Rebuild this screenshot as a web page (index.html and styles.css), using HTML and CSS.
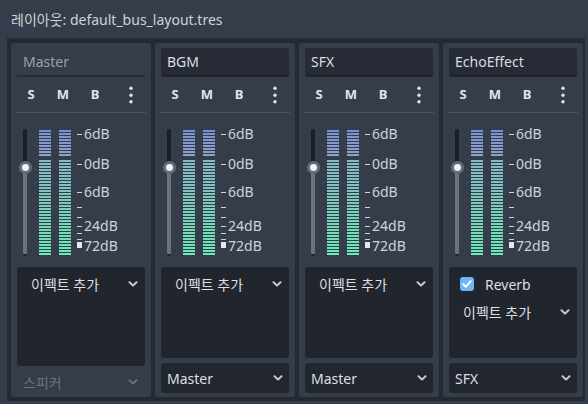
FILE: index.html
```html
<!DOCTYPE html>
<html lang="ko">
<head>
<meta charset="utf-8">
<title>Audio Buses</title>
<link rel="stylesheet" href="styles.css">
</head>
<body>
<div class="titlebar">레이아웃: default_bus_layout.tres</div>
<div class="buses">

  <!-- Master -->
  <div class="bus bus-master">
    <div class="name name-readonly">Master</div>
    <div class="toggles">
      <span class="tbtn">S</span><span class="tbtn">M</span><span class="tbtn">B</span>
      <span class="tbtn tmore"><svg width="6" height="18" viewBox="0 0 6 18"><circle cx="3" cy="2.3" r="1.7"/><circle cx="3" cy="9.3" r="1.7"/><circle cx="3" cy="15.8" r="1.7"/></svg></span>
    </div>
    <div class="sep"></div>
    <div class="meter">
      <div class="slider"><div class="track"></div><div class="grabber"><div class="grabber-dot"></div></div></div>
      <div class="bar"><div class="seg seg-hi"></div><div class="seg seg-lo"></div></div>
      <div class="bar bar-r"><div class="seg seg-hi"></div><div class="seg seg-lo"></div></div>
      <div class="scale">
        <div class="tick" style="top:5px"></div><div class="tick" style="top:35px"></div><div class="tick" style="top:63px"></div>
        <div class="tick" style="top:78px"></div><div class="tick" style="top:88px"></div><div class="tick" style="top:97px"></div>
        <div class="tick" style="top:104px"></div><div class="tick" style="top:110px"></div><div class="tick tick-block" style="top:113px"></div>
        <div class="lbl" style="top:-3px">6dB</div><div class="lbl" style="top:27px">0dB</div><div class="lbl" style="top:55px">6dB</div>
        <div class="lbl" style="top:89px">24dB</div><div class="lbl" style="top:109px">72dB</div>
      </div>
    </div>
    <div class="effects">
      <div class="fx-row"><span class="fx-add">이펙트 추가</span><svg class="chev" width="10" height="6" viewBox="0 0 10 6"><polyline points="1.5,1.2 5,4.6 8.5,1.2"/></svg></div>
    </div>
    <div class="output output-disabled"><span>스피커</span><svg class="chev" width="10" height="6" viewBox="0 0 10 6"><polyline points="1.5,1.2 5,4.6 8.5,1.2"/></svg></div>
  </div>

  <!-- BGM -->
  <div class="bus">
    <div class="name">BGM</div>
    <div class="toggles">
      <span class="tbtn">S</span><span class="tbtn">M</span><span class="tbtn">B</span>
      <span class="tbtn tmore"><svg width="6" height="18" viewBox="0 0 6 18"><circle cx="3" cy="2.3" r="1.7"/><circle cx="3" cy="9.3" r="1.7"/><circle cx="3" cy="15.8" r="1.7"/></svg></span>
    </div>
    <div class="sep"></div>
    <div class="meter">
      <div class="slider"><div class="track"></div><div class="grabber"><div class="grabber-dot"></div></div></div>
      <div class="bar"><div class="seg seg-hi"></div><div class="seg seg-lo"></div></div>
      <div class="bar bar-r"><div class="seg seg-hi"></div><div class="seg seg-lo"></div></div>
      <div class="scale">
        <div class="tick" style="top:5px"></div><div class="tick" style="top:35px"></div><div class="tick" style="top:63px"></div>
        <div class="tick" style="top:78px"></div><div class="tick" style="top:88px"></div><div class="tick" style="top:97px"></div>
        <div class="tick" style="top:104px"></div><div class="tick" style="top:110px"></div><div class="tick tick-block" style="top:113px"></div>
        <div class="lbl" style="top:-3px">6dB</div><div class="lbl" style="top:27px">0dB</div><div class="lbl" style="top:55px">6dB</div>
        <div class="lbl" style="top:89px">24dB</div><div class="lbl" style="top:109px">72dB</div>
      </div>
    </div>
    <div class="effects">
      <div class="fx-row"><span class="fx-add">이펙트 추가</span><svg class="chev" width="10" height="6" viewBox="0 0 10 6"><polyline points="1.5,1.2 5,4.6 8.5,1.2"/></svg></div>
    </div>
    <div class="output"><span>Master</span><svg class="chev" width="10" height="6" viewBox="0 0 10 6"><polyline points="1.5,1.2 5,4.6 8.5,1.2"/></svg></div>
  </div>

  <!-- SFX -->
  <div class="bus">
    <div class="name">SFX</div>
    <div class="toggles">
      <span class="tbtn">S</span><span class="tbtn">M</span><span class="tbtn">B</span>
      <span class="tbtn tmore"><svg width="6" height="18" viewBox="0 0 6 18"><circle cx="3" cy="2.3" r="1.7"/><circle cx="3" cy="9.3" r="1.7"/><circle cx="3" cy="15.8" r="1.7"/></svg></span>
    </div>
    <div class="sep"></div>
    <div class="meter">
      <div class="slider"><div class="track"></div><div class="grabber"><div class="grabber-dot"></div></div></div>
      <div class="bar"><div class="seg seg-hi"></div><div class="seg seg-lo"></div></div>
      <div class="bar bar-r"><div class="seg seg-hi"></div><div class="seg seg-lo"></div></div>
      <div class="scale">
        <div class="tick" style="top:5px"></div><div class="tick" style="top:35px"></div><div class="tick" style="top:63px"></div>
        <div class="tick" style="top:78px"></div><div class="tick" style="top:88px"></div><div class="tick" style="top:97px"></div>
        <div class="tick" style="top:104px"></div><div class="tick" style="top:110px"></div><div class="tick tick-block" style="top:113px"></div>
        <div class="lbl" style="top:-3px">6dB</div><div class="lbl" style="top:27px">0dB</div><div class="lbl" style="top:55px">6dB</div>
        <div class="lbl" style="top:89px">24dB</div><div class="lbl" style="top:109px">72dB</div>
      </div>
    </div>
    <div class="effects">
      <div class="fx-row"><span class="fx-add">이펙트 추가</span><svg class="chev" width="10" height="6" viewBox="0 0 10 6"><polyline points="1.5,1.2 5,4.6 8.5,1.2"/></svg></div>
    </div>
    <div class="output"><span>Master</span><svg class="chev" width="10" height="6" viewBox="0 0 10 6"><polyline points="1.5,1.2 5,4.6 8.5,1.2"/></svg></div>
  </div>

  <!-- EchoEffect -->
  <div class="bus">
    <div class="name">EchoEffect</div>
    <div class="toggles">
      <span class="tbtn">S</span><span class="tbtn">M</span><span class="tbtn">B</span>
      <span class="tbtn tmore"><svg width="6" height="18" viewBox="0 0 6 18"><circle cx="3" cy="2.3" r="1.7"/><circle cx="3" cy="9.3" r="1.7"/><circle cx="3" cy="15.8" r="1.7"/></svg></span>
    </div>
    <div class="sep"></div>
    <div class="meter">
      <div class="slider"><div class="track"></div><div class="grabber"><div class="grabber-dot"></div></div></div>
      <div class="bar"><div class="seg seg-hi"></div><div class="seg seg-lo"></div></div>
      <div class="bar bar-r"><div class="seg seg-hi"></div><div class="seg seg-lo"></div></div>
      <div class="scale">
        <div class="tick" style="top:5px"></div><div class="tick" style="top:35px"></div><div class="tick" style="top:63px"></div>
        <div class="tick" style="top:78px"></div><div class="tick" style="top:88px"></div><div class="tick" style="top:97px"></div>
        <div class="tick" style="top:104px"></div><div class="tick" style="top:110px"></div><div class="tick tick-block" style="top:113px"></div>
        <div class="lbl" style="top:-3px">6dB</div><div class="lbl" style="top:27px">0dB</div><div class="lbl" style="top:55px">6dB</div>
        <div class="lbl" style="top:89px">24dB</div><div class="lbl" style="top:109px">72dB</div>
      </div>
    </div>
    <div class="effects">
      <div class="fx-row fx-effect">
        <span class="checkbox"><svg width="14" height="14" viewBox="0 0 14 14"><polyline points="3.3,7.3 5.9,9.8 10.7,4.2"/></svg></span>
        <span class="fx-name">Reverb</span>
      </div>
      <div class="fx-row"><span class="fx-add">이펙트 추가</span><svg class="chev" width="10" height="6" viewBox="0 0 10 6"><polyline points="1.5,1.2 5,4.6 8.5,1.2"/></svg></div>
    </div>
    <div class="output"><span>SFX</span><svg class="chev" width="10" height="6" viewBox="0 0 10 6"><polyline points="1.5,1.2 5,4.6 8.5,1.2"/></svg></div>
  </div>

</div>
</body>
</html>
```

FILE: styles.css
```css
html, body {
  margin: 0;
  padding: 0;
}

body {
  width: 588px;
  height: 404px;
  overflow: hidden;
  background: #363d4a;
  font-family: "Noto Sans", "Noto Sans CJK KR", sans-serif;
  font-size: 14px;
  color: #d4d7dc;
}

.titlebar {
  height: 38px;
  box-sizing: border-box;
  padding: 1px 0 0 11px;
  line-height: 37px;
  color: #cfd2d8;
  white-space: nowrap;
}

.buses {
  margin-left: 7px;
  width: 578px;
  height: 363px;
  box-sizing: border-box;
  padding: 5px 2px 4px 4px;
  background: #252a32;
  display: flex;
  gap: 4px;
}

.bus {
  width: 140px;
  flex: none;
  box-sizing: border-box;
  padding: 5px 6px 4px;
  background: #363d4a;
  border-radius: 3px;
  display: flex;
  flex-direction: column;
}

.bus-master {
  padding-bottom: 0;
}

/* name field */
.name {
  height: 29px;
  flex: none;
  box-sizing: border-box;
  padding-left: 6px;
  line-height: 27px;
  background: #262b35;
  border-bottom: 2px solid #1f232a;
  border-radius: 3px 3px 2px 2px;
  color: #d9dce1;
}

.name-readonly {
  background: transparent;
  border-bottom-color: #272c35;
  border-radius: 0;
  color: #9ba0a9;
}

/* S M B row */
.toggles {
  height: 35px;
  flex: none;
  display: flex;
  align-items: center;
  gap: 4px;
}

.tbtn {
  width: 28px;
  text-align: center;
  font-size: 13px;
  font-weight: 700;
  color: #e2e4e8;
  line-height: 35px;
}

.tmore {
  margin-left: auto;
  display: flex;
  justify-content: center;
  align-items: center;
}

.tmore svg {
  fill: #e2e4e8;
}

.sep {
  height: 1px;
  flex: none;
  margin: 0 -1px;
  background: #4a5161;
}

/* meter */
.meter {
  height: 154px;
  flex: none;
  box-sizing: border-box;
  padding-top: 16px;
  display: flex;
  align-items: flex-start;
}

.slider {
  width: 16px;
  height: 127px;
  flex: none;
  position: relative;
  display: flex;
  justify-content: center;
}

.track {
  width: 4px;
  height: 127px;
  border-radius: 2px;
  background: linear-gradient(to bottom, #1b1e25 0 38px, #6c727e 38px 125px, #1b1e25 125px);
}

.grabber {
  position: absolute;
  left: 1.5px;
  top: 31.5px;
  width: 13px;
  height: 13px;
  border-radius: 50%;
  background: #646a77;
  display: flex;
  align-items: center;
  justify-content: center;
}

.grabber-dot {
  width: 7px;
  height: 7px;
  border-radius: 50%;
  background: #f2f3f5;
}

.bar {
  width: 12px;
  flex: none;
  margin-left: 6px;
  margin-top: 1px;
  display: flex;
  flex-direction: column;
  gap: 3px;
}

.bar-r {
  margin-left: 8px;
}

.seg-hi {
  height: 27px;
  background:
    repeating-linear-gradient(to bottom, transparent 0 2px, #363d4a 2px 3px),
    linear-gradient(to bottom, #7a8dd4, #8ba7ca);
}

.seg-lo {
  height: 96px;
  background:
    repeating-linear-gradient(to bottom, transparent 0 2px, #363d4a 2px 3px),
    linear-gradient(to bottom, #88b6c3, #7acbbc 45%, #6ceab7);
}

.scale {
  position: relative;
  flex: 1;
  height: 127px;
  margin-left: 6px;
}

.tick {
  position: absolute;
  left: 0;
  width: 5px;
  height: 1px;
  background: #cfd2d7;
}

.tick-block {
  height: 6px;
  background: #e6e8eb;
}

.lbl {
  position: absolute;
  left: 7px;
  line-height: 16px;
  color: #cfd2d7;
  white-space: nowrap;
}

/* effects list */
.effects {
  flex: 1;
  box-sizing: border-box;
  padding-top: 3px;
  background: #21252d;
  border-radius: 3px;
}

.fx-row {
  height: 28px;
  display: flex;
  align-items: center;
  padding: 0 7px 0 14px;
}

.fx-add {
  flex: 1;
  color: #dcdfe3;
  white-space: nowrap;
}

.fx-effect {
  padding-left: 11px;
  gap: 11px;
}

.fx-name {
  color: #dcdfe3;
}

.checkbox {
  width: 14px;
  height: 14px;
  border-radius: 3px;
  background: #6fb6f6;
  display: flex;
}

.checkbox polyline {
  fill: none;
  stroke: #ffffff;
  stroke-width: 2;
  stroke-linecap: round;
  stroke-linejoin: round;
}

.chev {
  flex: none;
}

.chev polyline {
  fill: none;
  stroke: #c7cbd1;
  stroke-width: 2;
  stroke-linecap: round;
  stroke-linejoin: round;
}

/* output dropdown */
.output {
  height: 30px;
  flex: none;
  margin-top: 5px;
  box-sizing: border-box;
  padding: 0 6px 0 6px;
  background: #22262e;
  border-radius: 3px;
  display: flex;
  align-items: center;
  justify-content: space-between;
  color: #dcdfe3;
}

.output-disabled {
  height: 31px;
  margin-top: 0;
  background: transparent;
  padding-right: 7px;
  color: #6c717b;
}

.output-disabled .chev polyline {
  stroke: #6c717b;
}
```
